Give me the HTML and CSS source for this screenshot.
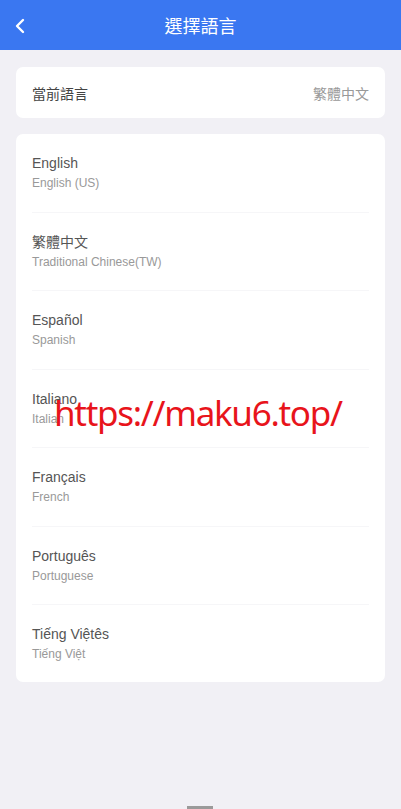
FILE: index.html
```html
<!DOCTYPE html>
<html lang="zh-Hant">
<head>
<meta charset="utf-8">
<meta name="viewport" content="width=device-width, initial-scale=1">
<title>選擇語言</title>
<link rel="stylesheet" href="styles.css">
</head>
<body>
<div class="page">
  <header class="navbar">
    <button class="back" aria-label="返回">
      <svg width="12" height="16" viewBox="0 0 12 16"><path d="M9 2 L3 8 L9 14" fill="none" stroke="#fff" stroke-width="2.4" stroke-linecap="round" stroke-linejoin="round"/></svg>
    </button>
    <h1 class="title">選擇語言</h1>
  </header>

  <main class="content">
    <section class="card current">
      <span class="current-label">當前語言</span>
      <span class="current-value">繁體中文</span>
    </section>

    <section class="card list">
      <div class="item"><div class="name">English</div><div class="sub">English (US)</div></div>
      <div class="item"><div class="name">繁體中文</div><div class="sub">Traditional Chinese(TW)</div></div>
      <div class="item"><div class="name">Español</div><div class="sub">Spanish</div></div>
      <div class="item"><div class="name">Italiano</div><div class="sub">Italian</div></div>
      <div class="item"><div class="name">Français</div><div class="sub">French</div></div>
      <div class="item"><div class="name">Português</div><div class="sub">Portuguese</div></div>
      <div class="item last"><div class="name">Tiếng Việtês</div><div class="sub">Tiếng Việt</div></div>
    </section>
  </main>

  <div class="watermark">https://maku6.top/</div>
  <div class="home-bar"></div>
</div>
</body>
</html>
```

FILE: styles.css
```css
* { box-sizing: border-box; }
html, body { margin: 0; padding: 0; }
body {
  background: #f1f0f5;
  font-family: "Liberation Sans", Arial, "Noto Sans CJK TC", sans-serif;
  color: #555;
}
.page {
  position: relative;
  min-height: 809px;
}
.navbar {
  position: relative;
  height: 50px;
  background: #3a77f1;
  display: flex;
  align-items: center;
  justify-content: center;
}
.back {
  position: absolute;
  left: 10px;
  top: 17px;
  width: 20px;
  height: 18px;
  padding: 0;
  border: 0;
  background: none;
  display: flex;
  align-items: center;
  justify-content: center;
}
.title {
  margin: 0;
  font-family: "Noto Sans CJK TC", sans-serif;
  font-size: 18px;
  font-weight: 400;
  color: #fff;
  line-height: 50px;
}
.content {
  padding: 17px 16px 0;
  display: flex;
  flex-direction: column;
  gap: 16px;
}
.card {
  background: #fff;
  border-radius: 7px;
}
.current {
  height: 51px;
  display: flex;
  align-items: center;
  justify-content: space-between;
  padding: 0 16px;
  font-family: "Noto Sans CJK TC", sans-serif;
  font-size: 14px;
}
.current-label { color: #444; }
.current-value { color: #999; }
.list {
  padding: 0 16px;
}
.item {
  height: 78.5px;
  padding-top: 19px;
  border-bottom: 1px solid #f6f6f8;
}
.item.last {
  height: 77px;
  border-bottom: 0;
}
.name {
  font-size: 14px;
  line-height: 20px;
  color: #555;
}
.sub {
  font-size: 12px;
  line-height: 20px;
  color: #999;
}
.watermark {
  position: absolute;
  left: 54px;
  top: 389px;
  font-family: "Noto Sans", sans-serif;
  font-size: 35px;
  letter-spacing: -1.3px;
  line-height: 48px;
  color: #e8141b;
  white-space: nowrap;
}
.home-bar {
  position: absolute;
  left: 187px;
  top: 806px;
  width: 26px;
  height: 3px;
  background: #9a9a9a;
}
```
